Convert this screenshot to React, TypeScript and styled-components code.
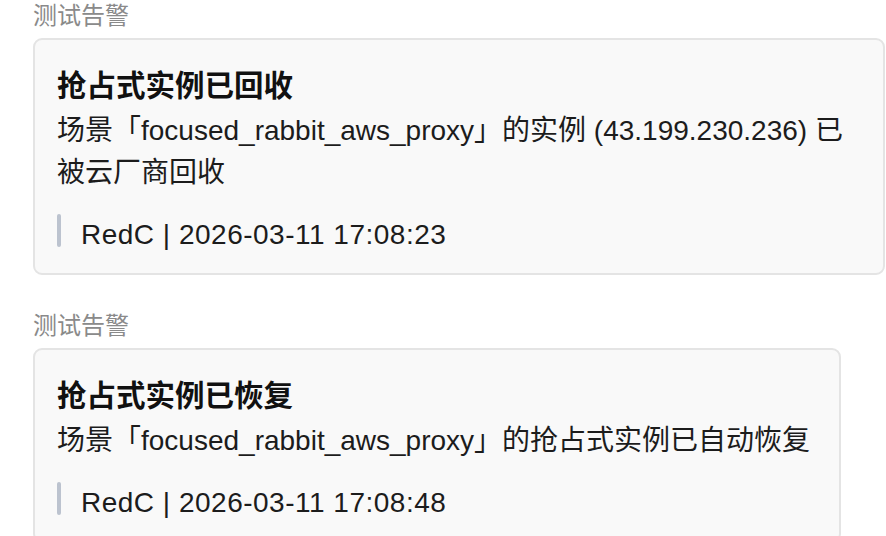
import React from 'react'
import styled, { createGlobalStyle } from 'styled-components'

const GlobalStyle = createGlobalStyle`
  html, body {
    margin: 0;
    padding: 0;
    background: #ffffff;
  }
  body {
    font-family: "Liberation Sans", "Noto Sans CJK SC", sans-serif;
  }
`

const Feed = styled.div`
  display: flex;
  flex-direction: column;
  gap: 35px;
  padding: 0 0 0 33px;
`

const Message = styled.div`
  display: flex;
  flex-direction: column;
  align-items: flex-start;
`

const Sender = styled.div`
  font-size: 24px;
  line-height: 32px;
  color: #8a8a8a;
  margin-bottom: 6px;
`

const Card = styled.div`
  box-sizing: border-box;
  width: fit-content;
  max-width: 852px;
  padding: 22px 29px 17px 22px;
  background: #f9f9f9;
  border: 2px solid #e4e4e4;
  border-radius: 9px;
  color: #1c1c1c;
`

const Title = styled.div`
  font-size: 29.5px;
  line-height: 48px;
  font-weight: 700;
  color: #111111;
`

const Body = styled.div`
  font-size: 28px;
  line-height: 42px;
`

const Quote = styled.div`
  display: flex;
  align-items: flex-start;
  gap: 20px;
  margin-top: 20px;
  font-size: 28px;
  line-height: 42px;
  letter-spacing: 0.5px;
`

const QuoteBar = styled.span`
  flex: none;
  width: 4px;
  height: 33px;
  border-radius: 2px;
  background: #bcc3cf;
`

type Alert = {
  title: string
  body: string
  footer: string
}

const alerts: Alert[] = [
  {
    title: '抢占式实例已回收',
    body: '场景「focused_rabbit_aws_proxy」的实例 (43.199.230.236) 已被云厂商回收',
    footer: 'RedC | 2026-03-11 17:08:23',
  },
  {
    title: '抢占式实例已恢复',
    body: '场景「focused_rabbit_aws_proxy」的抢占式实例已自动恢复',
    footer: 'RedC | 2026-03-11 17:08:48',
  },
]

export default function App() {
  return (
    <>
      <GlobalStyle />
      <Feed>
        {alerts.map((a) => (
          <Message key={a.footer}>
            <Sender>测试告警</Sender>
            <Card>
              <Title>{a.title}</Title>
              <Body>{a.body}</Body>
              <Quote>
                <QuoteBar />
                <span>{a.footer}</span>
              </Quote>
            </Card>
          </Message>
        ))}
      </Feed>
    </>
  )
}
